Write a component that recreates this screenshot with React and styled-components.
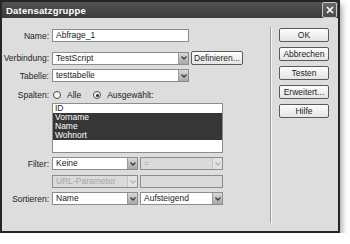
import React from 'react'
import styled, { createGlobalStyle, css } from 'styled-components'

const Global = createGlobalStyle`
  html, body {
    margin: 0;
    background: #fff;
  }
  body {
    font-family: "Liberation Sans", Arial, sans-serif;
    font-size: 8.5px;
    color: #222;
  }
`

const Window = styled.div`
  width: 336px;
  height: 229px;
  border: 2px solid #262626;
  background: #dddddd;
  box-shadow: 2px 4px 6px rgba(0, 0, 0, 0.35);
  display: flex;
  flex-direction: column;
`

const TitleBar = styled.div`
  height: 16px;
  flex: none;
  display: flex;
  align-items: center;
  justify-content: space-between;
  padding: 0 1px 0 4px;
  background: linear-gradient(#525252, #3a3a3a);
  color: #fff;
  font-weight: bold;
  font-size: 9.5px;
  letter-spacing: 0.2px;
`

const Close = styled.div`
  width: 13px;
  height: 14px;
  border: 1px solid #c8c8c8;
  border-radius: 2px;
  background: linear-gradient(#6a6a6a, #4a4a4a);
  display: flex;
  align-items: center;
  justify-content: center;
  margin-top: -1px;
`

const Body = styled.div`
  flex: 1;
  display: flex;
`

const Form = styled.div`
  width: 266px;
  padding-top: 11px;
  display: flex;
  flex-direction: column;
`

const Row = styled.div`
  display: flex;
  align-items: center;
  margin-top: ${p => p.$mt || 0}px;
  height: ${p => p.$h || 13}px;
  ${p =>
    p.$top &&
    css`
      align-items: flex-start;
    `}
`

const Label = styled.div`
  width: 47px;
  margin-right: 3px;
  text-align: right;
  white-space: nowrap;
`

const Field = styled.div`
  width: ${p => p.$w}px;
  height: 13px;
  box-sizing: border-box;
  border: 1px solid #8c8c8c;
  background: ${p => (p.$disabled ? '#dadada' : '#fff')};
  color: ${p => (p.$disabled ? '#a6a6a6' : '#222')};
  display: flex;
  align-items: center;
  margin-right: 2px;
  overflow: hidden;
`

const FieldText = styled.span`
  flex: 1;
  padding-left: 3px;
  line-height: 11px;
  white-space: nowrap;
`

const Arrow = styled.div`
  width: 9px;
  height: 11px;
  flex: none;
  border-left: 1px solid ${p => (p.$disabled ? '#c4c4c4' : '#9a9a9a')};
  background: ${p =>
    p.$disabled ? '#e2e2e2' : 'linear-gradient(#d8d8d8, #a8a8a8)'};
  display: flex;
  align-items: center;
  justify-content: center;
`

const Button = styled.div`
  width: ${p => p.$w || 50}px;
  height: 14px;
  box-sizing: border-box;
  border: 1px solid #5a5a5a;
  border-radius: 2px;
  background: linear-gradient(#fdfdfd, #e4e4e4);
  display: flex;
  align-items: center;
  justify-content: center;
  line-height: 12px;
  white-space: nowrap;
`

const Radios = styled.div`
  display: flex;
  align-items: center;
  padding-left: 1px;
`

const Radio = styled.span`
  width: 8px;
  height: 8px;
  box-sizing: border-box;
  border: 1px solid #4a4a4a;
  border-radius: 50%;
  background: #f6f6f6;
  display: flex;
  align-items: center;
  justify-content: center;
  margin-right: 6px;
  &::after {
    content: '';
    width: 3px;
    height: 3px;
    border-radius: 50%;
    background: ${p => (p.$checked ? '#2a2a2a' : 'transparent')};
  }
`

const RadioText = styled.span`
  margin-right: ${p => p.$mr || 0}px;
`

const List = styled.div`
  width: 171px;
  height: 50px;
  box-sizing: border-box;
  border: 1px solid #8c8c8c;
  background: #fff;
`

const Item = styled.div`
  height: 9px;
  line-height: 9px;
  padding-left: 2px;
  background: ${p => (p.$sel ? '#363636' : 'transparent')};
  color: ${p => (p.$sel ? '#fff' : '#222')};
`

const Divider = styled.div`
  width: 1px;
  margin: 9px 0 8px 2px;
  background: #9c9c9c;
  border-right: 1px solid #f6f6f6;
`

const Side = styled.div`
  padding: 10px 0 0 7px;
  display: flex;
  flex-direction: column;
  gap: 5px;
`

const Chevron = ({ disabled }) => (
  <svg width="6" height="4" viewBox="0 0 6 4">
    <path
      d="M0.5 0.5 L3 3 L5.5 0.5"
      fill="none"
      stroke={disabled ? '#b4b4b4' : '#3a3a3a'}
      strokeWidth="1.3"
    />
  </svg>
)

const Select = ({ w, children, disabled }) => (
  <Field $w={w} $disabled={disabled}>
    <FieldText>{children}</FieldText>
    <Arrow $disabled={disabled}>
      <Chevron disabled={disabled} />
    </Arrow>
  </Field>
)

export default function App() {
  return (
    <>
      <Global />
      <Window>
        <TitleBar>
          <span>Datensatzgruppe</span>
          <Close>
            <svg width="8" height="8" viewBox="0 0 8 8">
              <path d="M1 1 L7 7 M7 1 L1 7" stroke="#fff" strokeWidth="1.6" />
            </svg>
          </Close>
        </TitleBar>
        <Body>
          <Form>
            <Row>
              <Label>Name:</Label>
              <Field $w={137}>
                <FieldText>Abfrage_1</FieldText>
              </Field>
            </Row>
            <Row $mt={9} $h={14}>
              <Label>Verbindung:</Label>
              <Select w={137}>TestScript</Select>
              <Button $w={52}>Definieren...</Button>
            </Row>
            <Row $mt={4}>
              <Label>Tabelle:</Label>
              <Select w={137}>testtabelle</Select>
            </Row>
            <Row $mt={8} $h={10}>
              <Label>Spalten:</Label>
              <Radios>
                <Radio />
                <RadioText $mr={12}>Alle</RadioText>
                <Radio $checked />
                <RadioText>Ausgewählt:</RadioText>
              </Radios>
            </Row>
            <Row $mt={3} $h={50} $top>
              <Label />
              <List>
                <Item>ID</Item>
                <Item $sel>Vorname</Item>
                <Item $sel>Name</Item>
                <Item $sel>Wohnort</Item>
              </List>
            </Row>
            <Row $mt={4}>
              <Label>Filter:</Label>
              <Select w={86}>Keine</Select>
              <Select w={83} disabled>=</Select>
            </Row>
            <Row $mt={5}>
              <Label />
              <Select w={86} disabled>URL-Parameter</Select>
              <Field $w={83} $disabled />
            </Row>
            <Row $mt={4}>
              <Label>Sortieren:</Label>
              <Select w={86}>Name</Select>
              <Select w={83}>Aufsteigend</Select>
            </Row>
          </Form>
          <Divider />
          <Side>
            <Button>OK</Button>
            <Button>Abbrechen</Button>
            <Button>Testen</Button>
            <Button>Erweitert...</Button>
            <Button>Hilfe</Button>
          </Side>
        </Body>
      </Window>
    </>
  )
}
